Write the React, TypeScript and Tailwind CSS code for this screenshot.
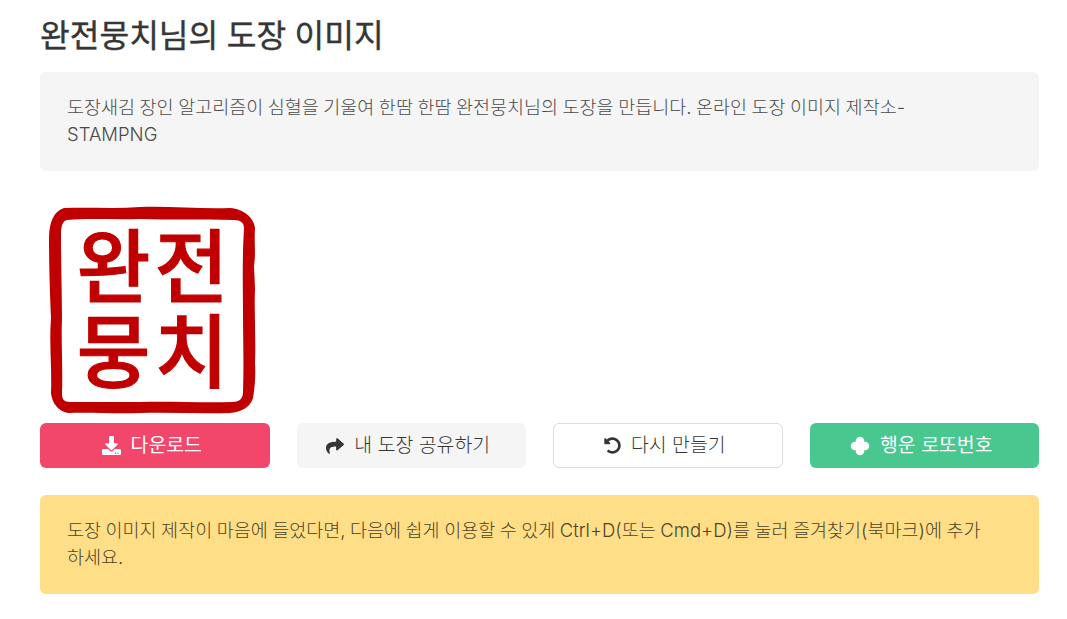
const font = { fontFamily: 'Inter, "Noto Sans CJK KR", "Noto Sans", sans-serif' };

const DownloadIcon = () => (
  <svg viewBox="0 0 512 512" className="h-[19px] w-[19px]" fill="currentColor">
    <path d="M216 0h80c13.300 0 24 10.700 24 24v168h87.700c17.800 0 26.700 21.500 14.100 34.100L269.700 378.300c-7.500 7.500-19.800 7.500-27.300 0L90.100 226.100c-12.600-12.600-3.700-34.100 14.100-34.100H192V24c0-13.300 10.700-24 24-24zm296 376v112c0 13.300-10.700 24-24 24H24c-13.300 0-24-10.700-24-24V376c0-13.300 10.700-24 24-24h146.700l49 49c20.100 20.100 52.500 20.100 72.600 0l49-49H488c13.300 0 24 10.700 24 24zm-124 88c0-11-9-20-20-20s-20 9-20 20 9 20 20 20 20-9 20-20zm64 0c0-11-9-20-20-20s-20 9-20 20 9 20 20 20 20-9 20-20z" />
  </svg>
);

const ShareIcon = () => (
  <svg viewBox="0 0 512 512" className="h-[18px] w-[18px]" fill="currentColor">
    <path d="M503.700 189.800L327.700 37.900C312.300 24.600 288 35.400 288 56v80.100C127.400 137.900 0 170.100 0 322.300c0 61.400 39.600 122.300 83.300 154.100 13.700 9.900 33.100-2.500 28.100-18.600C66.100 312.800 132.900 274.300 288 272.100V360c0 20.700 24.300 31.400 39.700 18.100l176-152c11.100-9.600 11.100-26.700 0-36.300z" />
  </svg>
);

const UndoIcon = () => (
  <svg viewBox="0 0 512 512" className="h-[17px] w-[17px]" fill="currentColor">
    <path d="M255.500 8c-66.300.100-126.400 26.300-170.800 68.700L48.970 40.970C33.850 25.850 8 36.560 8 57.940V192c0 13.250 10.750 24 24 24h134.100c21.380 0 32.090-25.850 16.970-40.970l-41.760-41.760c30.870-28.900 70.820-44.910 113.200-45.280 92.350-.8 170.200 73.930 169.400 169.300C423.100 348.700 349.100 424 256 424c-40.820 0-79.400-14.570-109.800-41.240-4.740-4.160-11.900-3.900-16.360.56l-39.660 39.660c-4.870 4.870-4.630 12.820.48 17.440C134.600 479.900 192.600 504 256 504c137 0 248-111 248-248C504 119.200 392.600 7.750 255.500 8z" />
  </svg>
);

const CloverIcon = () => (
  <svg viewBox="0 0 20 20" className="h-[20px] w-[20px]" fill="currentColor">
    <circle cx="10" cy="5" r="4.300" />
    <circle cx="10" cy="15" r="4.300" />
    <circle cx="5" cy="10" r="4.300" />
    <circle cx="15" cy="10" r="4.300" />
    <rect x="7" y="7" width="6" height="6" />
  </svg>
);

const Stamp = () => (
  <div className="relative h-[225px] w-[225px] blur-[0.4px]">
    <svg viewBox="0 0 225 225" className="absolute inset-0 h-full w-full">
      <path
        fill="#c00000"
        fillRule="evenodd"
        d="M24 10C50 9 75 11 100 9C130 8 160 11 190 10C204 11 214 20 215 30C214 45 216 55 214 68L215 90C214 115 216 140 215 165C216 180 214 195 213 200C210 210 200 214 190 215C160 216 130 214 100 215C75 216 50 214 28 215C18 213 12 205 11 195C12 170 9 145 11 120C10 95 9 70 9 40C9 24 14 13 24 10ZM27 22C23 23 21 27 21 36C21 70 22 95 22 120C21 145 23 170 22 196C22 201 24 204 30 204C55 204 75 204 100 204C130 203 160 205 192 204C199 204 203 201 203 194C204 165 203 140 203 115C203 90 202 65 204 30C204 25 201 22 194 22C160 21 130 22 100 21C75 22 50 20 27 22Z"
      />
    </svg>
    <div
      className="relative grid h-full w-full grid-cols-[78px_78px] grid-rows-[88px_82px] content-center justify-center pb-[18px] text-[80px] leading-none font-medium text-[#c00000] [-webkit-text-stroke:1.2px_#c00000]"
      style={{ fontFamily: '"Noto Sans CJK KR", sans-serif' }}
    >
      <span className="flex items-center justify-center">완</span>
      <span className="flex items-center justify-center">전</span>
      <span className="flex items-center justify-center">뭉</span>
      <span className="flex items-center justify-center">치</span>
    </div>
  </div>
);

const App = () => {
  return (
    <div className="min-h-[619px] bg-white pt-[12px] pr-[28px] pl-10 text-[18.5px] leading-[26.5px] text-[#4a4a4a] [word-spacing:-0.7px]" style={font}>
      <h1 className="mb-[13px] text-[32.3px] leading-[47px] font-normal text-[#363636] [-webkit-text-stroke:0.4px_#363636]">
        완전뭉치님의 도장 이미지
      </h1>

      <div className="mb-[27px] rounded-[6px] bg-[#f5f5f5] pt-[22px] pr-[45px] pb-[24px] pl-[27px] font-light">
        도장새김 장인 알고리즘이 심혈을 기울여 한땀 한땀 완전뭉치님의 도장을 만듭니다. 온라인 도장 이미지 제작소-STAMPNG
      </div>

      <Stamp />

      <div className="mb-[27px] grid grid-cols-4 gap-[27px] text-[19.4px]">
        <button className="flex h-[45px] items-center justify-center gap-[10px] rounded-[6px] bg-[#f3466b] pr-[6px] text-white">
          <DownloadIcon />
          <span>다운로드</span>
        </button>
        <button className="flex h-[45px] items-center justify-center gap-[10px] rounded-[6px] bg-[#f5f5f5] pr-[6px] font-light text-[#363636]">
          <ShareIcon />
          <span>내 도장 공유하기</span>
        </button>
        <button className="flex h-[45px] items-center justify-center gap-[10px] rounded-[6px] border border-[#dbdbdb] bg-white pr-[6px] font-light text-[#363636]">
          <UndoIcon />
          <span>다시 만들기</span>
        </button>
        <button className="flex h-[45px] items-center justify-center gap-[10px] rounded-[6px] bg-[#48c78e] pr-[6px] text-white">
          <CloverIcon />
          <span>행운 로또번호</span>
        </button>
      </div>

      <div className="rounded-[6px] bg-[#ffde88] pt-[22px] pr-[45px] pb-[24px] pl-[27px] font-light text-[#4d4427]">
        도장 이미지 제작이 마음에 들었다면, 다음에 쉽게 이용할 수 있게 Ctrl+D(또는 Cmd+D)를 눌러 즐겨찾기(북마크)에 추가하세요.
      </div>
    </div>
  );
};

export default App;
